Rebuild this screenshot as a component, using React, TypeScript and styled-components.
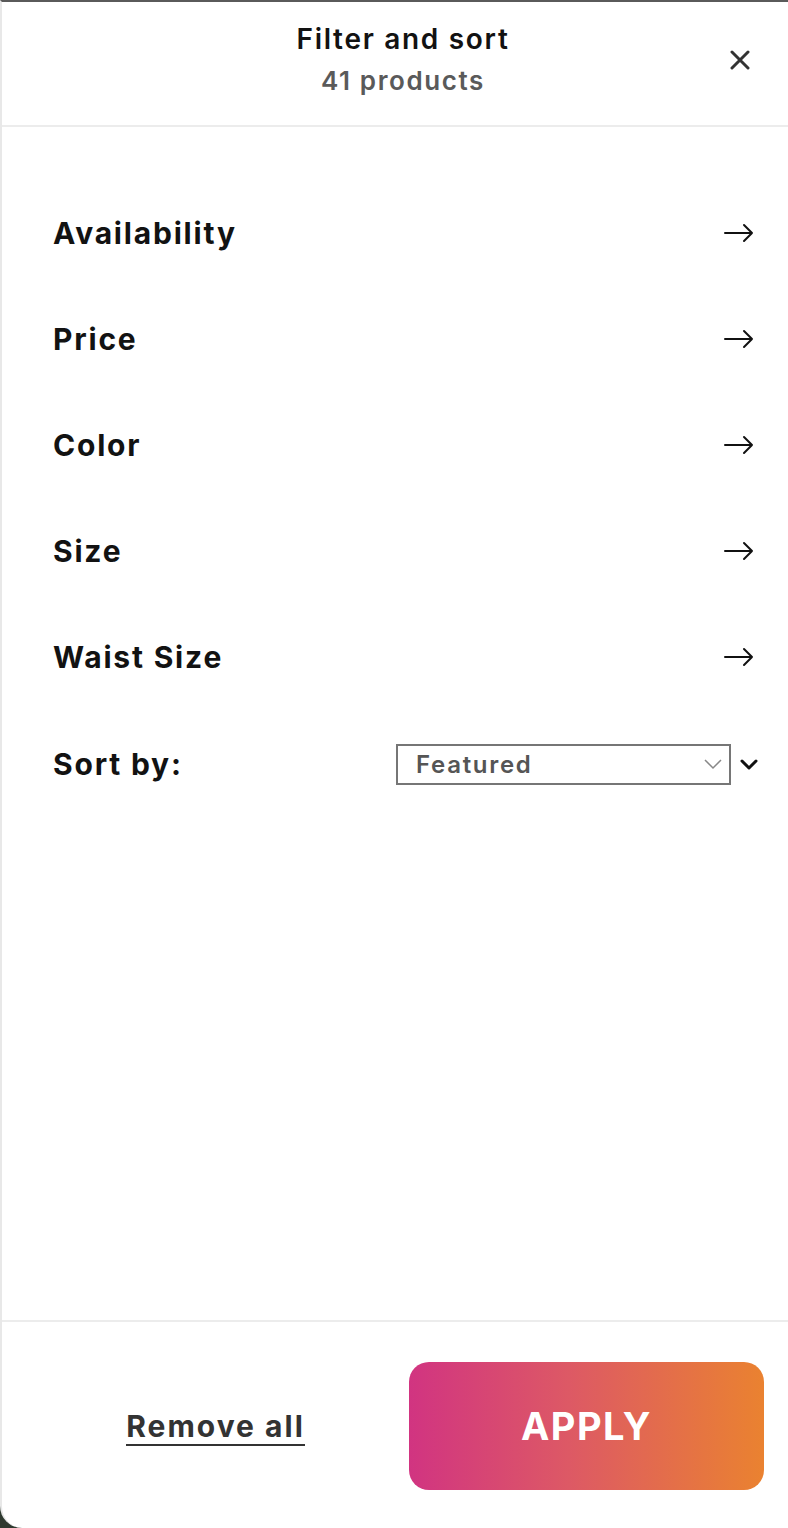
import React from "react";
import styled, { createGlobalStyle } from "styled-components";

const Global = createGlobalStyle`
  html, body { margin: 0; padding: 0; }
  body {
    background: #2f3a30;
    font-family: Inter, "Noto Sans", sans-serif;
    -webkit-font-smoothing: antialiased;
  }
  * { box-sizing: border-box; }
`;

const Drawer = styled.div`
  height: 1528px;
  display: flex;
  flex-direction: column;
  background: #fff;
  border-top: 2px solid #5a5a5a;
  border-left: 2px solid #e8e8e8;
  border-bottom-left-radius: 22px;
  overflow: hidden;
`;

const Header = styled.header`
  position: relative;
  height: 125px;
  flex: none;
  display: flex;
  flex-direction: column;
  align-items: center;
  justify-content: center;
  gap: 9px;
  padding: 0 0 8px 16px;
  border-bottom: 2px solid #ececec;
`;

const Title = styled.h2`
  margin: 0;
  font-size: 28px;
  font-weight: 600;
  color: #121212;
  letter-spacing: 1.7px;
  line-height: 34px;
`;

const Count = styled.div`
  font-size: 26px;
  font-weight: 600;
  color: #5a5a5a;
  letter-spacing: 1.6px;
  line-height: 32px;
`;

const Close = styled.button`
  position: absolute;
  right: 33px;
  top: 43px;
  width: 30px;
  height: 30px;
  padding: 0;
  border: 0;
  background: none;
  display: flex;
  align-items: center;
  justify-content: center;
`;

const Content = styled.div`
  flex: 1;
  padding-top: 53px;
  display: flex;
  flex-direction: column;
`;

const Row = styled.div`
  height: 106px;
  display: flex;
  align-items: center;
  justify-content: space-between;
  padding: 0 34px 0 51px;
`;

const SortRow = styled(Row)`
  height: 108px;
  padding-right: 29px;
`;

const Label = styled.span`
  font-size: 30px;
  font-weight: 700;
  color: #121212;
  letter-spacing: 1.8px;
`;

const SelectWrap = styled.div`
  display: flex;
  align-items: center;
  gap: 8px;
`;

const SelectBox = styled.div`
  width: 335px;
  height: 41px;
  border: 2px solid #767676;
  display: flex;
  align-items: center;
  justify-content: space-between;
  padding: 0 6px 0 18px;
  font-size: 24px;
  font-weight: 600;
  color: #555;
  letter-spacing: 1.7px;
`;

const Footer = styled.footer`
  flex: none;
  height: 208px;
  border-top: 2px solid #ececec;
  display: grid;
  grid-template-columns: 407px 355px;
  align-items: start;
  padding-top: 40px;
`;

const RemoveAll = styled.button`
  justify-self: center;
  align-self: center;
  margin-top: -34px;
  margin-left: 20px;
  padding: 0 0 2px;
  border: 0;
  border-bottom: 2px solid #333;
  background: none;
  font-family: inherit;
  font-size: 30px;
  font-weight: 700;
  color: #333;
  letter-spacing: 2px;
  line-height: 32px;
`;

const Apply = styled.button`
  height: 128px;
  border: 0;
  border-radius: 20px;
  background: linear-gradient(90deg, #d13481 0%, #dd5965 45%, #ea8230 100%);
  color: #fff;
  font-family: inherit;
  font-size: 38px;
  font-weight: 700;
  letter-spacing: 1.5px;
`;

const Arrow = () => (
  <svg width="30" height="20" viewBox="0 0 30 20" fill="none" stroke="#111" strokeWidth="2" strokeLinecap="round" strokeLinejoin="round">
    <path d="M1 10h27M20 2l8 8-8 8" />
  </svg>
);

const filters = ["Availability", "Price", "Color", "Size", "Waist Size"];

export default function App() {
  return (
    <>
      <Global />
      <Drawer>
        <Header>
          <Title>Filter and sort</Title>
          <Count>41 products</Count>
          <Close aria-label="Close">
            <svg width="20" height="20" viewBox="0 0 20 20" stroke="#333" strokeWidth="3" strokeLinecap="round">
              <path d="M2 2l16 16M18 2L2 18" />
            </svg>
          </Close>
        </Header>
        <Content>
          {filters.map((f) => (
            <Row key={f}>
              <Label>{f}</Label>
              <Arrow />
            </Row>
          ))}
          <SortRow>
            <Label>Sort by:</Label>
            <SelectWrap>
              <SelectBox>
                Featured
                <svg width="20" height="12" viewBox="0 0 20 12" fill="none" stroke="#888" strokeWidth="1.5">
                  <path d="M2 2l8 8 8-8" />
                </svg>
              </SelectBox>
              <svg width="20" height="12" viewBox="0 0 20 12" fill="none" stroke="#111" strokeWidth="3" strokeLinecap="round" strokeLinejoin="round">
                <path d="M3 3l7 7 7-7" />
              </svg>
            </SelectWrap>
          </SortRow>
        </Content>
        <Footer>
          <RemoveAll>Remove all</RemoveAll>
          <Apply>APPLY</Apply>
        </Footer>
      </Drawer>
    </>
  );
}
